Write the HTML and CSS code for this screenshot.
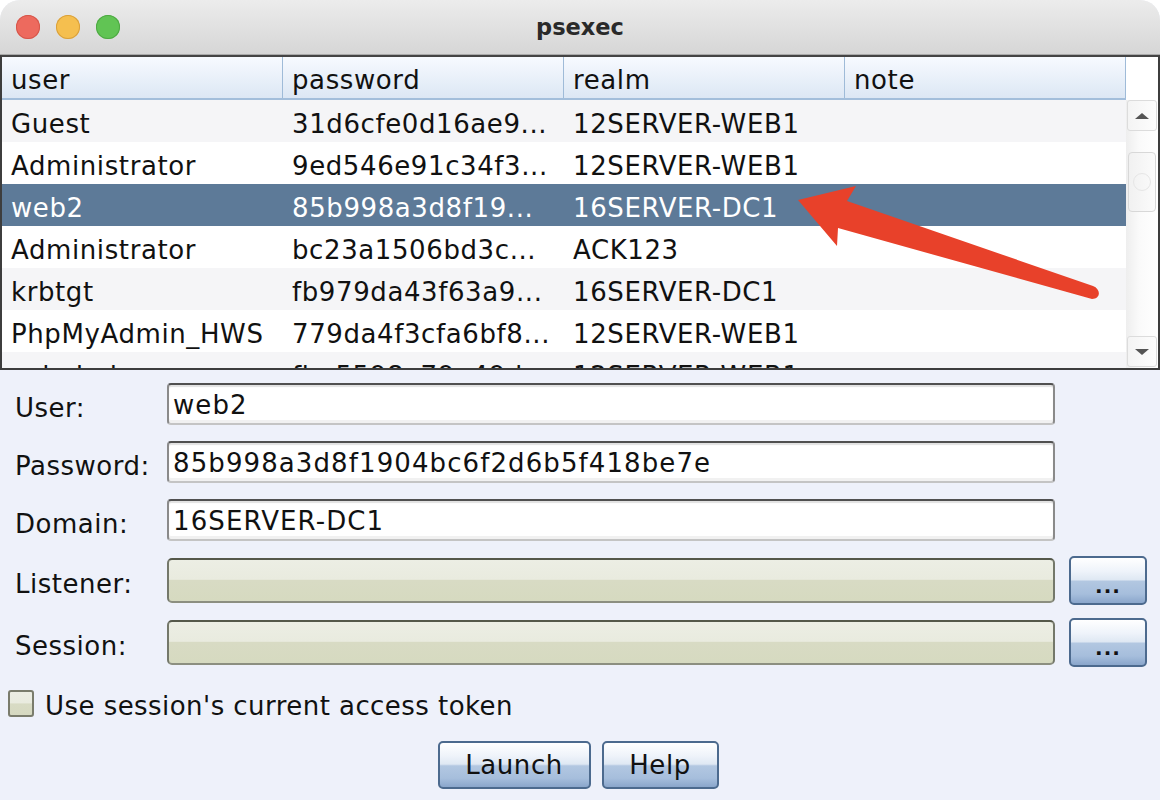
FILE: index.html
```html
<!DOCTYPE html>
<html>
<head>
<meta charset="utf-8">
<title>psexec</title>
<link rel="stylesheet" href="styles.css">
</head>
<body>
<div class="window">
  <div class="titlebar">
    <div class="lights">
      <span class="light red"></span>
      <span class="light yellow"></span>
      <span class="light green"></span>
    </div>
    <div class="title">psexec</div>
    <div></div>
  </div>

  <div class="pane">
    <div class="thead">
      <div class="th">user</div>
      <div class="th">password</div>
      <div class="th">realm</div>
      <div class="th">note</div>
    </div>
    <div class="corner"></div>
    <div class="tbody">
      <div class="tr odd"><div class="td">Guest</div><div class="td">31d6cfe0d16ae9...</div><div class="td">12SERVER-WEB1</div><div class="td"></div></div>
      <div class="tr"><div class="td">Administrator</div><div class="td">9ed546e91c34f3...</div><div class="td">12SERVER-WEB1</div><div class="td"></div></div>
      <div class="tr selected"><div class="td">web2</div><div class="td">85b998a3d8f19...</div><div class="td">16SERVER-DC1</div><div class="td"></div></div>
      <div class="tr"><div class="td">Administrator</div><div class="td">bc23a1506bd3c...</div><div class="td">ACK123</div><div class="td"></div></div>
      <div class="tr odd"><div class="td">krbtgt</div><div class="td">fb979da43f63a9...</div><div class="td">16SERVER-DC1</div><div class="td"></div></div>
      <div class="tr"><div class="td">PhpMyAdmin_HWS</div><div class="td">779da4f3cfa6bf8...</div><div class="td">12SERVER-WEB1</div><div class="td"></div></div>
      <div class="tr odd"><div class="td">sqladmin</div><div class="td">fbe5598e79e49de...</div><div class="td">12SERVER-WEB1</div><div class="td"></div></div>
    </div>
    <div class="scrollbar">
      <div class="sb-btn"><svg width="16" height="8" viewBox="0 0 16 8"><path d="M1 7 L8 1 L15 7 Z" fill="#555"/></svg></div>
      <div class="sb-track">
        <div class="sb-thumb"><span class="grip"></span></div>
      </div>
      <div class="sb-btn"><svg width="16" height="8" viewBox="0 0 16 8"><path d="M1 1 L15 1 L8 7 Z" fill="#555"/></svg></div>
    </div>
  </div>

  <div class="form">
    <div class="row r-user">
      <label class="lbl">User:</label>
      <div class="field">web2</div>
    </div>
    <div class="row r-gap16">
      <label class="lbl">Password:</label>
      <div class="field">85b998a3d8f1904bc6f2d6b5f418be7e</div>
    </div>
    <div class="row r-gap16">
      <label class="lbl">Domain:</label>
      <div class="field">16SERVER-DC1</div>
    </div>
    <div class="row r-pick r-listener">
      <label class="lbl">Listener:</label>
      <div class="field olive"></div>
      <button class="btn more">...</button>
    </div>
    <div class="row r-pick r-session">
      <label class="lbl">Session:</label>
      <div class="field olive"></div>
      <button class="btn more">...</button>
    </div>
    <div class="check-row">
      <span class="checkbox"></span>
      <span class="check-label">Use session's current access token</span>
    </div>
    <div class="buttons">
      <button class="btn launch">Launch</button>
      <button class="btn help">Help</button>
    </div>
  </div>

  <svg class="arrow" width="1160" height="800" viewBox="0 0 1160 800">
    <path d="M798 200 L856 186 L847 201 L1093 286 C1101 289 1101 299 1092 299 L838 228 L837 246 Z" fill="#e8412a"/>
  </svg>
</div>
</body>
</html>
```

FILE: styles.css
```css
* { box-sizing: border-box; }

body {
  margin: 0;
  background: #ffffff;
  font-family: "DejaVu Sans", "Liberation Sans", sans-serif;
  font-size: 26px;
  color: #111;
}

.window {
  position: relative;
  width: 1160px;
  height: 800px;
  background: #eef1fa;
  border-radius: 20px 20px 0 0;
  overflow: hidden;
}

/* ---------- title bar ---------- */
.titlebar {
  height: 55px;
  display: grid;
  grid-template-columns: 1fr auto 1fr;
  align-items: center;
  background: linear-gradient(#ececec, #d6d6d6);
  border-bottom: 1px solid #a9a9a9;
}
.lights {
  display: flex;
  gap: 16px;
  padding-left: 16px;
  padding-bottom: 1px;
}
.light {
  width: 24px;
  height: 24px;
  border-radius: 50%;
}
.red { background: #ed6a5e; box-shadow: inset 0 0 0 1px #d5574b; }
.yellow { background: #f5bf4f; box-shadow: inset 0 0 0 1px #d9a03c; }
.green { background: #61c454; box-shadow: inset 0 0 0 1px #4ea843; }
.title {
  font-weight: bold;
  font-size: 22.5px;
  color: #2a2a2a;
  padding-bottom: 1px;
}

/* ---------- table pane ---------- */
.pane {
  height: 315px;
  border: 2px solid #3d3d3d;
  border-top-color: #444;
  display: grid;
  grid-template-columns: 1124px 32px;
  grid-template-rows: 43px 268px;
  background: #fff;
}
.thead {
  display: grid;
  grid-template-columns: repeat(4, 281px);
  border-bottom: 2px solid #a3bedb;
}
.th {
  background: linear-gradient(#f7faff, #dce7f4);
  border-right: 1px solid #9fbbd8;
  padding: 6px 0 0 9px;
  line-height: 35px;
  color: #111;
  letter-spacing: 0.6px;
}
.corner { background: #fff; }

.tbody {
  overflow: hidden;
}
.tr {
  display: grid;
  grid-template-columns: repeat(4, 281px);
  height: 42px;
  background: #fff;
}
.tr.odd { background: #f5f5f7; }
.tr.selected { background: #5d7a98; color: #fff; }
.td {
  padding: 6px 0 0 9px;
  line-height: 36px;
  white-space: nowrap;
  overflow: hidden;
  letter-spacing: 0.6px;
}

/* scrollbar */
.scrollbar {
  display: flex;
  flex-direction: column;
  background: linear-gradient(to right, #eeeeee, #fafafa 40%, #ffffff);
  padding: 0 1px 1px 1px;
}
.sb-btn {
  height: 31px;
  display: flex;
  align-items: center;
  justify-content: center;
  background: linear-gradient(to right, #f4f4f4, #fdfdfd);
  border: 1px solid #dcdcdc;
  border-radius: 3px;
}
.sb-track {
  flex: 1;
  padding-top: 21px;
}
.sb-thumb {
  height: 60px;
  margin: 0 1px;
  border: 1px solid #d8d8d8;
  border-radius: 4px;
  background: linear-gradient(to right, #f1f1f1, #fbfbfb);
  display: flex;
  align-items: center;
  justify-content: center;
}
.grip {
  width: 18px;
  height: 18px;
  border-radius: 50%;
  border: 1px solid #e6e6e6;
}

/* ---------- form ---------- */
.form {
  padding: 13px 0 0 15px;
}
.row {
  display: flex;
  align-items: center;
  height: 42px;
}
.r-gap16 { margin-top: 16px; }
.r-pick { height: 49px; }
.r-listener { margin-top: 15px; }
.r-session { margin-top: 13px; }

.lbl {
  width: 152px;
  padding-top: 7px;
  line-height: 30px;
  letter-spacing: 0.5px;
}
.field {
  width: 888px;
  height: 42px;
  background: #fff;
  border: 2px solid;
  border-color: #505050 #8a8a8a #c4c4c4 #8a8a8a;
  border-radius: 4px;
  box-shadow: inset 0 2px 1px #e2e2e2, inset 0 -3px 0 #f1f1f1;
  padding: 2px 0 0 4px;
  line-height: 36px;
  letter-spacing: 1.1px;
  white-space: nowrap;
}
.field.olive {
  height: 45px;
  border-color: #55584a #74786a #8c8f80 #74786a;
  border-radius: 5px;
  background: linear-gradient(#eceee4 0%, #e9ebdf 47%, #d8dbc4 50%, #d6dac0 100%);
  box-shadow: none;
}

.btn {
  font-family: inherit;
  color: #111;
  border: 2px solid #4c6a8e;
  border-radius: 5px;
  background: linear-gradient(#ffffff 0%, #eef3fa 30%, #dfe8f3 48%, #b2c7e1 52%, #a6bedc 80%, #8aa6cb 100%);
  padding: 0;
  cursor: default;
}
.more {
  margin-left: 14px;
  width: 78px;
  height: 49px;
  font-size: 20px;
  font-weight: bold;
  padding-top: 10px;
  letter-spacing: 1px;
}

.check-row {
  margin-top: 23px;
  margin-left: -7px;
  height: 27px;
  display: flex;
  align-items: center;
  gap: 11px;
}
.checkbox {
  width: 26px;
  height: 27px;
  border: 2px solid #7a7c6c;
  border-radius: 3px;
  background: linear-gradient(#ecede3 0%, #e9ebdf 47%, #d8dbc4 52%, #d6d9c1 100%);
}
.check-label {
  letter-spacing: 0.45px;
  padding-top: 4px;
}

.buttons {
  margin-top: 24px;
  margin-left: -15px;
  display: flex;
  justify-content: center;
  gap: 11px;
  padding-right: 4px;
}
.launch, .help {
  height: 48px;
  font-size: 26px;
  letter-spacing: 0.6px;
}
.launch { width: 153px; }
.help { width: 117px; }

/* annotation overlay */
.arrow {
  position: absolute;
  left: 0;
  top: 0;
  pointer-events: none;
}
```
